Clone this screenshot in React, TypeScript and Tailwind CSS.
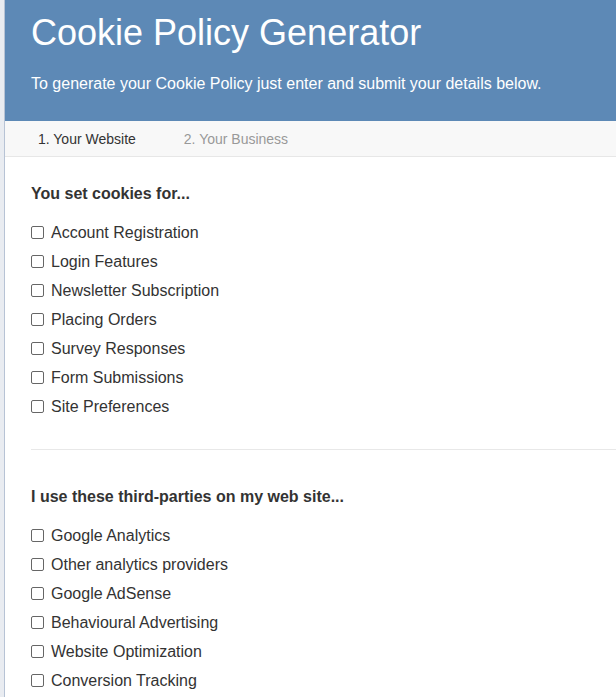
import React from "react"

const cookieUses = [
  "Account Registration",
  "Login Features",
  "Newsletter Subscription",
  "Placing Orders",
  "Survey Responses",
  "Form Submissions",
  "Site Preferences",
]

const thirdParties = [
  "Google Analytics",
  "Other analytics providers",
  "Google AdSense",
  "Behavioural Advertising",
  "Website Optimization",
  "Conversion Tracking",
]

function CheckRow({ label }: { label: string }) {
  return (
    <label className="flex items-center h-[29px] text-[16px] text-[#333]">
      <input
        type="checkbox"
        className="appearance-none w-[13px] h-[13px] border border-[#666] rounded-[2px] bg-white mr-[7px]"
      />
      <span>{label}</span>
    </label>
  )
}

export default function App() {
  return (
    <div
      className="flex min-h-[697px] bg-white"
      style={{ fontFamily: '"Liberation Sans", Arial, sans-serif' }}
    >
      <div className="w-[5px] shrink-0 bg-[#e9ecf1] border-r border-[#b7c3d5]" />
      <div className="flex-1 min-w-0">
        {/* header */}
        <div className="bg-[#5d89b6] h-[121px] pl-[26px] pt-[12px]">
          <h1 className="text-[36px] leading-[42px] text-white">Cookie Policy Generator</h1>
          <p className="mt-[20px] text-[16px] leading-[20px] text-white">
            To generate your Cookie Policy just enter and submit your details below.
          </p>
        </div>

        {/* steps */}
        <div className="flex items-center h-[36px] pt-[1px] bg-[#f8f8f8] border-b border-[#e7e7e7] pl-[33px] text-[14px]">
          <span className="text-[#333]">1. Your Website</span>
          <span className="ml-[48px] text-[#999]">2. Your Business</span>
        </div>

        <div className="pl-[26px] pt-[27px]">
          <h2 className="text-[16px] font-bold text-[#333] leading-[20px] mb-[14px]">
            You set cookies for...
          </h2>
          {cookieUses.map(u => (
            <CheckRow key={u} label={u} />
          ))}

          <div className="mt-[28px] border-t border-[#e8e8e8]" />

          <h2 className="mt-[37px] text-[16px] font-bold text-[#333] leading-[20px] mb-[14px]">
            I use these third-parties on my web site...
          </h2>
          {thirdParties.map(u => (
            <CheckRow key={u} label={u} />
          ))}
        </div>
      </div>
    </div>
  )
}
